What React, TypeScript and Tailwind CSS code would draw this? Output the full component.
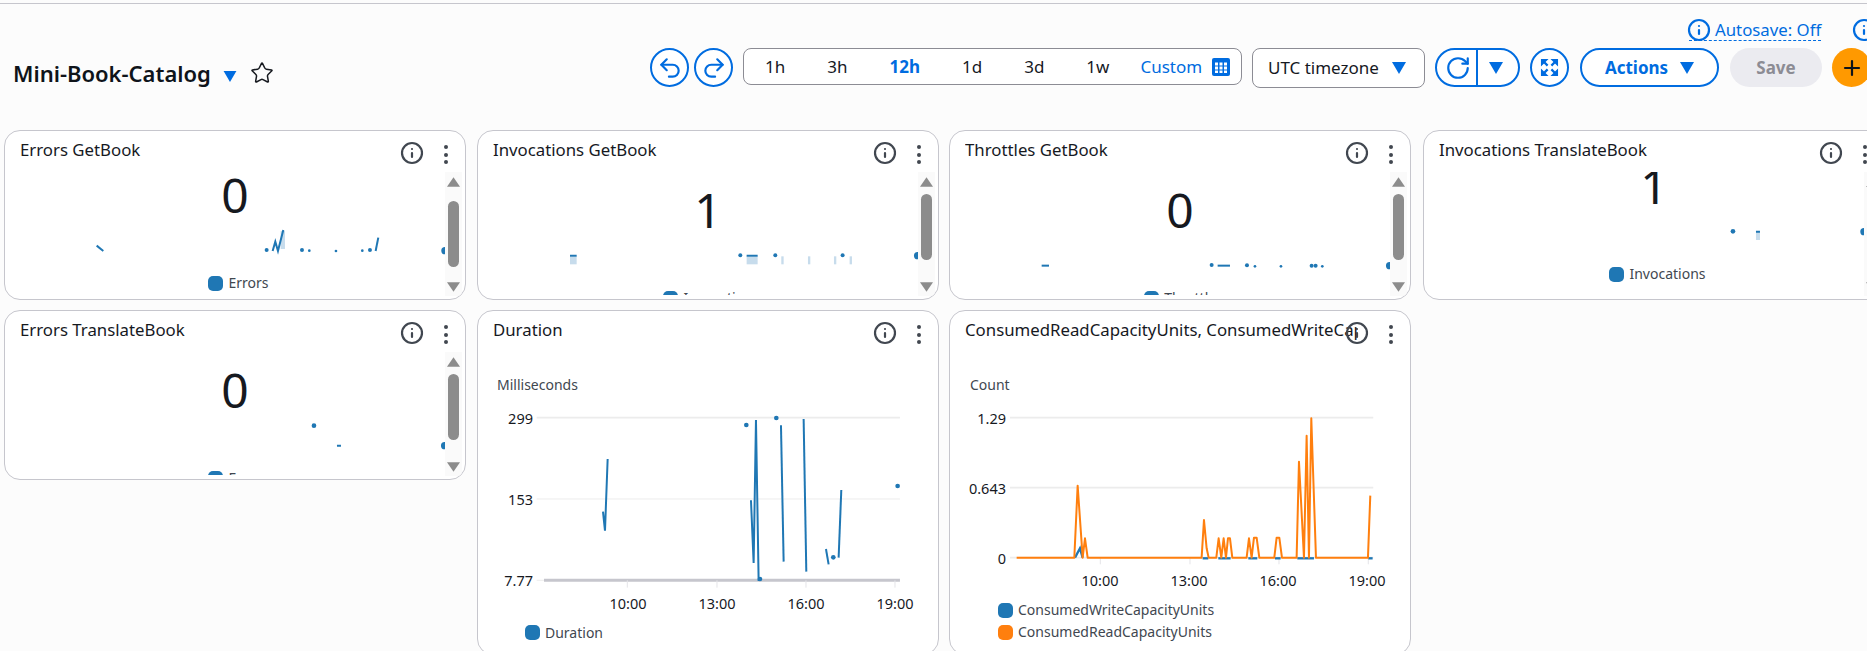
import { Info, Plus, Redo2, RotateCw, Star, Undo2 } from 'lucide-react'
import type { ReactNode } from 'react'

type Mark =
  | { kind: 'dot'; x: number; y: number; r?: number }
  | { kind: 'line'; points: string }
  | { kind: 'area'; x: number; y: number; w: number; h: number }

const BLUE = '#1f77b4'
const ORANGE = '#ff7f0e'

// mark coordinates are in 3x crop units, drawn through scale(1/3)
const sparks: Record<string, Mark[]> = {
  errorsGet: [
    { kind: 'line', points: '290,362 310,378' },
    { kind: 'dot', x: 800, y: 375 },
    { kind: 'area', x: 842, y: 318, w: 13, h: 54 },
    { kind: 'line', points: '818,378 826,350 834,378 850,315' },
    { kind: 'dot', x: 906, y: 375 },
    { kind: 'dot', x: 928, y: 377, r: 4 },
    { kind: 'dot', x: 1008, y: 378, r: 4 },
    { kind: 'dot', x: 1087, y: 377, r: 4 },
    { kind: 'dot', x: 1110, y: 375 },
    { kind: 'line', points: '1127,378 1135,338' },
    { kind: 'dot', x: 1335, y: 377, r: 11 },
  ],
  invocationsGet: [
    { kind: 'area', x: 300, y: 392, w: 20, h: 26 },
    { kind: 'line', points: '300,392 320,392' },
    { kind: 'dot', x: 811, y: 391 },
    { kind: 'area', x: 830, y: 392, w: 33, h: 26 },
    { kind: 'line', points: '830,392 863,392' },
    { kind: 'dot', x: 916, y: 391 },
    { kind: 'area', x: 934, y: 394, w: 7, h: 24 },
    { kind: 'area', x: 1014, y: 394, w: 7, h: 24 },
    { kind: 'area', x: 1092, y: 394, w: 7, h: 24 },
    { kind: 'dot', x: 1118, y: 391 },
    { kind: 'area', x: 1139, y: 394, w: 7, h: 24 },
    { kind: 'dot', x: 1343, y: 392, r: 11 },
  ],
  throttlesGet: [
    { kind: 'line', points: '290,422 312,422' },
    { kind: 'dot', x: 800, y: 420 },
    { kind: 'line', points: '818,422 855,422' },
    { kind: 'dot', x: 906, y: 421 },
    { kind: 'dot', x: 930, y: 424, r: 4 },
    { kind: 'dot', x: 1008, y: 424, r: 4 },
    { kind: 'dot', x: 1100, y: 422 },
    { kind: 'dot', x: 1112, y: 422 },
    { kind: 'dot', x: 1132, y: 424, r: 4 },
    { kind: 'dot', x: 1334, y: 422, r: 11 },
  ],
  invocationsTranslate: [
    { kind: 'dot', x: 939, y: 319, r: 7 },
    { kind: 'area', x: 1008, y: 320, w: 12, h: 25 },
    { kind: 'line', points: '1008,320 1020,320' },
    { kind: 'dot', x: 1332, y: 320, r: 11 },
  ],
  errorsTranslate: [
    { kind: 'dot', x: 942, y: 362, r: 7 },
    { kind: 'line', points: '1011,422 1023,422' },
    { kind: 'dot', x: 1334, y: 422, r: 11 },
  ],
}

function Caret({ className }: { className: string }) {
  return (
    <svg viewBox="0 0 14 12" className={className} fill="currentColor">
      <path d="M0 0h14L7 12z" />
    </svg>
  )
}

function Spark({ marks, viewBox }: { marks: Mark[]; viewBox: string }) {
  return (
    <svg viewBox={viewBox} className="block h-[54px] w-[440px] shrink-0">
      <g transform="scale(0.3333)">
        {marks.map((m, i) => {
          if (m.kind === 'dot') return <circle key={i} cx={m.x} cy={m.y} r={m.r ?? 6} fill={BLUE} />
          if (m.kind === 'area') return <rect key={i} x={m.x} y={m.y} width={m.w} height={m.h} fill="#c7dcec" />
          return <polyline key={i} points={m.points} fill="none" stroke={BLUE} strokeWidth="6" />
        })}
      </g>
    </svg>
  )
}

function Swatch({ color }: { color: string }) {
  return <span className="h-[15px] w-[15px] shrink-0 rounded-[5px]" style={{ backgroundColor: color }} />
}

function Card({ title, children, className }: { title: string; children: ReactNode; className: string }) {
  return (
    <div className={`relative w-[462px] shrink-0 overflow-hidden rounded-[16px] border border-[#c6c6cd] bg-white ${className}`}>
      <div className="flex h-[41px] items-start pl-[15px] pt-[6px]">
        <div className="w-[392px] shrink-0 overflow-hidden whitespace-nowrap text-[16.8px] leading-[26px] text-[#16191f]">{title}</div>
        <Info className="-ml-[12px] mt-[4px] h-[24px] w-[24px] shrink-0 text-[#414750]" strokeWidth={2.2} />
        <div className="ml-[20px] mt-[8px] flex flex-col gap-[3.5px]">
          <span className="h-[4px] w-[4px] rounded-full bg-[#414750]" />
          <span className="h-[4px] w-[4px] rounded-full bg-[#414750]" />
          <span className="h-[4px] w-[4px] rounded-full bg-[#414750]" />
        </div>
      </div>
      {children}
    </div>
  )
}

function Scrollbar({ thumb }: { thumb: string }) {
  return (
    <div className="absolute bottom-[3px] right-[3px] top-[41px] flex w-[17px] flex-col items-center bg-[#fafafa] pt-[5px]">
      <svg viewBox="0 0 14 10" className="h-[10px] w-[13px] shrink-0" fill="#8c8c8c"><path d="M7 0l7 10H0z" /></svg>
      <div className={`w-[11px] rounded-full bg-[#8c8c8c] ${thumb}`} />
      <svg viewBox="0 0 14 10" className="mb-[4px] mt-auto h-[10px] w-[13px] shrink-0" fill="#8c8c8c"><path d="M0 0h14L7 10z" /></svg>
    </div>
  )
}

function StatCard(props: {
  title: string
  value: string
  legend: string
  marks: Mark[]
  viewBox: string
  offset: string
  thumb: string
  className: string
}) {
  return (
    <Card title={props.title} className={props.className}>
      <div className="h-[123px] overflow-hidden">
        <div className={props.offset}>
          <div className="h-[48px] text-center text-[48px] leading-[48px] text-[#16191f]">{props.value}</div>
          <Spark marks={props.marks} viewBox={props.viewBox} />
          <div className="flex h-[20px] items-center justify-center gap-[5px] pl-[7px] text-[14px] text-[#414750]">
            <Swatch color={BLUE} />
            <span className="-mt-[2px]">{props.legend}</span>
          </div>
        </div>
      </div>
      <Scrollbar thumb={props.thumb} />
    </Card>
  )
}

function ChartText({ x, y, children }: { x: number; y: number; children: string }) {
  return (
    <text x={x} y={y} textAnchor="end" dominantBaseline="central" fontSize="14.5" fill="#16191f">
      {children}
    </text>
  )
}

const times = ['10:00', '13:00', '16:00', '19:00']

function DurationChart() {
  const lines = [
    '399,620 405,677 413,462',
    '843,586 851,774 858,345 866,828',
    '933,361 941,770',
    '1001,342 1009,800',
    '1068,732 1076,778',
    '1106,758 1114,555',
  ]
  const dots = [[829, 360], [919, 339], [1090, 757], [1283, 543], [870, 822]]
  const ticks = [472, 741, 1008, 1275]
  return (
    <svg viewBox="8 90 460 197" className="block h-[197px] w-[460px]">
      <g transform="scale(0.3333)">
        <line x1="200" x2="1290" y1="338" y2="338" stroke="#ececec" strokeWidth="5" />
        <line x1="200" x2="1290" y1="582" y2="582" stroke="#ececec" strokeWidth="3" />
        <line x1="200" x2="222" y1="826" y2="826" stroke="#ececec" strokeWidth="3" />
        <line x1="222" x2="1290" y1="826" y2="826" stroke="#c6c6cd" strokeWidth="9" />
        {ticks.map((t) => (
          <line key={t} x1={t} x2={t} y1="826" y2="848" stroke="#e4e4e8" strokeWidth="3" />
        ))}
        {lines.map((p) => (
          <polyline key={p} points={p} fill="none" stroke={BLUE} strokeWidth="6" />
        ))}
        {dots.map(([x, y]) => (
          <circle key={x} cx={x} cy={y} r="7" fill={BLUE} />
        ))}
      </g>
      <ChartText x={63} y={113}>299</ChartText>
      <ChartText x={63} y={194}>153</ChartText>
      <ChartText x={63} y={275}>7.77</ChartText>
    </svg>
  )
}

function TimeLabels() {
  return (
    <div className="ml-[130px] flex h-[24px] w-[307px] items-center justify-between text-[14.5px] text-[#16191f]">
      {times.map((t) => (
        <span key={t} className="w-[40px] text-center">{t}</span>
      ))}
    </div>
  )
}

function CapacityChart() {
  const orange =
    '230,758 403,758 413,542 428,758 435,700 443,758 785,758 792,645 800,730 806,758 829,758 836,700 844,758 851,700 858,758 864,700 870,700 877,758 920,758 927,700 935,758 942,698 950,698 958,758 1003,758 1010,698 1018,698 1026,758 1070,758 1077,470 1092,758 1100,392 1107,758 1114,340 1128,758 1284,758 1291,572'
  const ticks = [481, 750, 1017, 1285]
  const blueRuns = ['788,760 805,760', '835,760 872,760', '925,760 952,760', '1005,760 1022,760', '1072,760 1122,760', '1285,760 1298,760']
  return (
    <svg viewBox="10 90 460 174" className="block h-[174px] w-[460px]">
      <g transform="scale(0.3333)">
        <line x1="210" x2="1300" y1="338" y2="338" stroke="#ececec" strokeWidth="5" />
        <line x1="210" x2="1300" y1="548" y2="548" stroke="#ececec" strokeWidth="5" />
        <line x1="210" x2="1300" y1="758" y2="758" stroke="#ececec" strokeWidth="5" />
        {ticks.map((t) => (
          <line key={t} x1={t} x2={t} y1="758" y2="778" stroke="#e4e4e8" strokeWidth="3" />
        ))}
        <polyline points="405,758 420,730 428,758" fill="none" stroke={BLUE} strokeWidth="7" />
        {blueRuns.map((p) => (
          <polyline key={p} points={p} fill="none" stroke={BLUE} strokeWidth="7" />
        ))}
        <polyline points={orange} fill="none" stroke={ORANGE} strokeWidth="6" strokeLinejoin="round" />
      </g>
      <ChartText x={66} y={113}>1.29</ChartText>
      <ChartText x={66} y={183}>0.643</ChartText>
      <ChartText x={66} y={253}>0</ChartText>
    </svg>
  )
}

function RoundButton({ children, className }: { children: ReactNode; className: string }) {
  return (
    <button className={`flex shrink-0 items-center justify-center rounded-full border-2 border-[#006ce0] bg-white text-[#006ce0] ${className}`}>
      {children}
    </button>
  )
}

export default function App() {
  return (
    <div className="h-[651px] w-[1867px] overflow-hidden bg-[#fcfcfc] pt-[3px] font-['Noto_Sans',sans-serif]">
      <div className="border-t border-[#c6c6cd]" />

      {/* autosave row */}
      <div className="mt-[16px] flex h-[20px] whitespace-nowrap pl-[1689px] text-[#006ce0]">
        <div className="flex h-[21px] w-[132px] shrink-0 items-center gap-[4px] border-b border-dashed border-[#006ce0] text-[16.8px] leading-[20px]">
          <Info className="-ml-[2px] h-[24px] w-[24px] shrink-0" strokeWidth={2.2} />
          Autosave: Off
        </div>
        <Info className="ml-[31px] h-[24px] w-[24px] shrink-0 -translate-y-[2px]" strokeWidth={2.2} />
      </div>

      {/* toolbar */}
      <div className="mt-[8px] flex h-[39px] items-center whitespace-nowrap text-[17px]">
        <div className="mt-[10px] flex w-[650px] shrink-0 items-center pl-[13px]">
          <span className="text-[22px] font-semibold leading-[30px] text-[#0f141a]">Mini-Book-Catalog</span>
          <Caret className="ml-[12px] mt-[8px] h-[11px] w-[14px] text-[#006ce0]" />
          <Star className="ml-[13px] h-[24px] w-[24px] text-[#16191f]" strokeWidth={1.5} />
        </div>
        <RoundButton className="h-[39px] w-[39px]"><Undo2 className="h-[26px] w-[26px]" strokeWidth={2} /></RoundButton>
        <RoundButton className="ml-[5px] h-[39px] w-[39px]"><Redo2 className="h-[26px] w-[26px]" strokeWidth={2} /></RoundButton>
        <div className="ml-[10px] flex h-[37px] w-[499px] shrink-0 items-center self-start rounded-[8px] border border-[#8c8c94] bg-white pl-[21px] text-[#16191f]">
          <div className="flex items-center gap-[42px]">
            <span>1h</span>
            <span>3h</span>
            <span className="font-bold text-[#006ce0]">12h</span>
            <span>1d</span>
            <span>3d</span>
            <span>1w</span>
          </div>
          <span className="ml-[31px] text-[#006ce0]">Custom</span>
          <svg viewBox="0 0 18 18" className="ml-[10px] h-[18px] w-[18px]">
            <rect width="18" height="18" rx="2" fill="#006ce0" />
            <g fill="#fff">
              <rect x="3" y="4.5" width="3" height="3" />
              <rect x="7.5" y="4.5" width="3" height="3" />
              <rect x="12" y="4.5" width="3" height="3" />
              <rect x="3" y="8.5" width="3" height="3" />
              <rect x="7.5" y="8.5" width="3" height="3" />
              <rect x="12" y="8.5" width="3" height="3" />
              <rect x="3" y="12.5" width="3" height="2.5" />
              <rect x="7.5" y="12.5" width="3" height="2.5" />
              <rect x="12" y="12.5" width="3" height="2.5" />
            </g>
          </svg>
        </div>
        <div className="ml-[10px] flex h-[40px] w-[173px] shrink-0 items-center justify-between rounded-[8px] border border-[#8c8c94] bg-white pl-[15px] pr-[18px] text-[#16191f]">
          UTC timezone
          <Caret className="h-[12px] w-[14px] text-[#006ce0]" />
        </div>
        <div className="ml-[10px] flex h-[39px] w-[85px] shrink-0 items-center rounded-full border-2 border-[#006ce0] bg-white text-[#006ce0]">
          <div className="flex h-full w-[41px] items-center justify-center border-r-2 border-[#006ce0] pl-[2px]">
            <RotateCw className="h-[26px] w-[26px]" strokeWidth={2} />
          </div>
          <Caret className="ml-[11px] h-[12px] w-[14px]" />
        </div>
        <RoundButton className="ml-[10px] h-[39px] w-[39px]">
          <svg viewBox="0 0 20 20" className="h-[19px] w-[19px]" fill="currentColor" stroke="currentColor">
            <path strokeWidth="0" d="M1 1h8L1 9zM19 1v8l-8-8zM1 19v-8l8 8zM19 19h-8l8-8z" />
            <path strokeWidth="2.4" d="M4 4l4 4M16 4l-4 4M4 16l4-4M16 16l-4-4" />
          </svg>
        </RoundButton>
        <button className="ml-[11px] flex h-[39px] w-[139px] shrink-0 items-center justify-center gap-[12px] rounded-full border-2 border-[#006ce0] bg-white font-bold text-[#006ce0]">
          Actions
          <Caret className="h-[12px] w-[14px]" />
        </button>
        <button className="ml-[11px] h-[39px] w-[92px] shrink-0 rounded-full bg-[#ebebf0] font-bold text-[#8c8c94]">Save</button>
        <button className="ml-[10px] flex h-[39px] w-[39px] shrink-0 items-center justify-center rounded-full bg-[#ff9900] text-[#0f141a]">
          <Plus className="h-[24px] w-[24px]" strokeWidth={2.2} />
        </button>
      </div>

      {/* widgets */}
      <div className="ml-[4px] mt-[43px] flex flex-col gap-[10px]">
        <div className="flex gap-[11px]">
          <StatCard title="Errors GetBook" value="0" legend="Errors" marks={sparks.errorsGet} viewBox="5 94 440 54" offset="-mt-[1px]" thumb="mt-[14px] h-[66px]" className="h-[170px]" />
          <StatCard title="Invocations GetBook" value="1" legend="Invocations" marks={sparks.invocationsGet} viewBox="8 109 440 54" offset="mt-[14px]" thumb="mt-[7px] h-[66px]" className="h-[170px]" />
          <StatCard title="Throttles GetBook" value="0" legend="Throttles" marks={sparks.throttlesGet} viewBox="5 109 440 54" offset="mt-[14px]" thumb="mt-[7px] h-[66px]" className="-ml-[1px] h-[170px]" />
          <StatCard title="Invocations TranslateBook" value="1" legend="Invocations" marks={sparks.invocationsTranslate} viewBox="4 85 440 54" offset="-mt-[10px]" thumb="mt-[7px] h-[66px]" className="ml-[1px] h-[170px]" />
        </div>
        <div className="flex gap-[11px]">
          <StatCard title="Errors TranslateBook" value="0" legend="Errors" marks={sparks.errorsTranslate} viewBox="5 109 440 54" offset="mt-[14px]" thumb="mt-[7px] h-[66px]" className="h-[170px]" />
          <Card title="Duration" className="h-[345px]">
            <div className="pl-[19px] pt-[23px] text-[14px] leading-[20px] text-[#414750]">Milliseconds</div>
            <DurationChart />
            <TimeLabels />
            <div className="mt-[6px] flex items-center gap-[5px] pl-[47px] text-[14px] text-[#414750]">
              <Swatch color={BLUE} />
              Duration
            </div>
          </Card>
          <Card title="ConsumedReadCapacityUnits, ConsumedWriteCapacityUnits" className="-ml-[1px] h-[345px]">
            <div className="pl-[20px] pt-[23px] text-[14px] leading-[20px] text-[#414750]">Count</div>
            <CapacityChart />
            <TimeLabels />
            <div className="mt-[8px] flex flex-col gap-[4px] pl-[48px] text-[14px] leading-[18px] text-[#414750]">
              <div className="flex items-center gap-[5px]"><Swatch color={BLUE} />ConsumedWriteCapacityUnits</div>
              <div className="flex items-center gap-[5px]"><Swatch color={ORANGE} />ConsumedReadCapacityUnits</div>
            </div>
          </Card>
        </div>
      </div>
    </div>
  )
}
